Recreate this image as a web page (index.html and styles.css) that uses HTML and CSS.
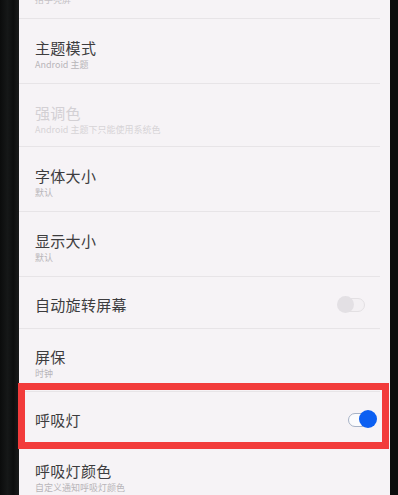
FILE: index.html
```html
<!DOCTYPE html>
<html lang="zh-CN">
<head>
<meta charset="utf-8">
<link rel="stylesheet" href="styles.css">
</head>
<body>
<div class="device">
  <div class="bezel bezel-left"></div>
  <main class="screen">
    <div class="item item-cut">
      <div class="sub">抬手亮屏</div>
    </div>
    <div class="item">
      <div class="title">主题模式</div>
      <div class="sub">Android 主题</div>
    </div>
    <div class="item item-disabled">
      <div class="title">强调色</div>
      <div class="sub">Android 主题下只能使用系统色</div>
    </div>
    <div class="item">
      <div class="title">字体大小</div>
      <div class="sub">默认</div>
    </div>
    <div class="item">
      <div class="title">显示大小</div>
      <div class="sub">默认</div>
    </div>
    <div class="item item-single">
      <div class="title">自动旋转屏幕</div>
      <div class="toggle toggle-off"><span class="track"></span><span class="thumb"></span></div>
    </div>
    <div class="item item-short">
      <div class="title">屏保</div>
      <div class="sub">时钟</div>
    </div>
    <div class="item item-single item-marked">
      <div class="title">呼吸灯</div>
      <div class="toggle toggle-on"><span class="track"></span><span class="thumb"></span></div>
    </div>
    <div class="item item-last">
      <div class="title">呼吸灯颜色</div>
      <div class="sub">自定义通知呼吸灯颜色</div>
    </div>
  </main>
  <div class="bezel bezel-right"></div>
</div>
</body>
</html>
```
FILE: styles.css
```css
html, body {
  margin: 0;
  padding: 0;
  height: 495px;
  overflow: hidden;
  background: #0e0f0f;
}
.device {
  display: flex;
  height: 495px;
}
.bezel-left {
  width: 19px;
  flex: none;
  background: linear-gradient(90deg, #0b0c0c 0%, #161818 40%, #0d0e0e 70%, #1a1b1b 100%);
}
.bezel-right {
  width: 8px;
  flex: none;
  background: #0c0d0d;
}
.screen {
  flex: 1;
  position: relative;
  background: #f6f3f6;
  display: flex;
  flex-direction: column;
  font-family: "Noto Sans CJK SC", "Noto Sans", sans-serif;
}
.item {
  display: flex;
  flex-direction: column;
  padding: 20px 0 12px 16px;
  border-bottom: 1px solid #e7e4e7;
  margin-right: 10px;
  position: relative;
}
.item-cut {
  padding-top: 0;
  margin-top: -6px;
}
.item-cut .sub {
  margin-top: 0;
  color: #c4c1c5;
}
.item-single {
  flex-direction: row;
  align-items: center;
  justify-content: space-between;
  padding-top: 19px;
  padding-bottom: 14px;
}
.item-short {
  padding-top: 19px;
  padding-bottom: 11px;
}
.item-last {
  padding-top: 19px;
}
.title {
  font-size: 15px;
  line-height: 18px;
  color: #3d3c3e;
  letter-spacing: 0.3px;
}
.sub {
  font-size: 9px;
  line-height: 12px;
  margin-top: 2px;
  color: #b8b5b9;
}
.item-disabled {
  padding-bottom: 10px;
}
.item-disabled .title {
  color: #d3d0d4;
}
.item-disabled .sub {
  color: #d6d3d7;
}
.item-marked {
  border-bottom-color: transparent;
  padding-bottom: 13px;
}
.item-marked::after {
  content: "";
  position: absolute;
  left: -1px;
  right: -9px;
  top: -9px;
  bottom: -7px;
  border: 7px solid #f23b3b;
  pointer-events: none;
}
.toggle {
  position: relative;
  width: 30px;
  height: 18px;
  flex: none;
}
.toggle .track {
  position: absolute;
  top: 2px;
  height: 12px;
  border-radius: 7px;
}
.toggle .thumb {
  position: absolute;
  top: 0;
  width: 17px;
  height: 17px;
  border-radius: 50%;
}
.toggle-off {
  margin-right: 13px;
}
.toggle-off .track {
  left: 3px;
  right: 2px;
  background: #f3f0f3;
  border: 1px solid #e3e0e3;
}
.toggle-off .thumb {
  left: 0;
  background: #e3e0e4;
}
.toggle-on {
  margin-right: 3px;
  width: 29px;
}
.toggle-on .track {
  left: 0;
  right: 6px;
  background: #fbfbfd;
  border: 1.5px solid #a7b2c6;
}
.toggle-on .thumb {
  right: 0;
  top: -1px;
  width: 18px;
  height: 18px;
  background: #0b5ff2;
}
```
